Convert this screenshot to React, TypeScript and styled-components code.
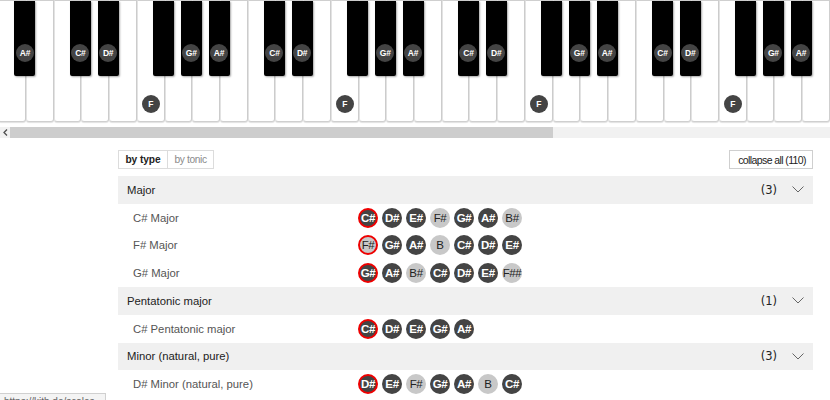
import React from "react";
import styled, { createGlobalStyle } from "styled-components";

const KEY_W = 27.72;

const GlobalStyle = createGlobalStyle`
  html, body { margin: 0; padding: 0; background: #fff; }
  body { font-family: "Liberation Sans", Arial, sans-serif; overflow: hidden; }
  * { box-sizing: border-box; }
`;

const Page = styled.div`
  position: relative;
  width: 830px;
  height: 400px;
  overflow: hidden;
`;

const PianoViewport = styled.div`
  height: 127px;
  overflow: hidden;
`;

const WhiteKeys = styled.div`
  display: flex;
  margin-left: -1.75px;
`;

const WhiteKey = styled.div`
  position: relative;
  flex: 0 0 ${KEY_W}px;
  height: 122px;
  background: #fff;
  border: 1px solid #cfcfcf;
  border-left-color: #e3e3e3;
  border-radius: 0 0 3px 3px;
  box-shadow: 0 1px 1px rgba(0, 0, 0, 0.12);
  display: flex;
  align-items: flex-end;
  justify-content: center;
  padding-bottom: 8px;
`;

const BlackKey = styled.div`
  position: absolute;
  top: 0;
  left: ${KEY_W - 12.5}px;
  width: 21px;
  height: 75px;
  background: #000;
  border-radius: 0 0 2px 2px;
  box-shadow: 1px 1px 2px rgba(0, 0, 0, 0.35);
  z-index: 2;
  display: flex;
  align-items: flex-end;
  justify-content: center;
  padding-bottom: 14px;
`;

const KeyLabel = styled.div`
  width: 18px;
  height: 18px;
  border-radius: 50%;
  background: #444;
  color: #fff;
  font-size: 8.5px;
  font-weight: bold;
  display: flex;
  align-items: center;
  justify-content: center;
  letter-spacing: -0.2px;
`;

const Scrollbar = styled.div`
  display: flex;
  height: 11px;
  background: #f1f1f1;
`;

const ScrollArrow = styled.div`
  flex: 0 0 10px;
  display: flex;
  align-items: center;
  justify-content: center;
`;

const ScrollThumb = styled.div`
  flex: 0 0 543px;
  background: #cdcdcd;
`;

const Content = styled.div`
  width: 695px;
  margin: 12px 0 0 118px;
`;

const Toolbar = styled.div`
  display: flex;
  justify-content: space-between;
  align-items: center;
  height: 19px;
  margin-bottom: 7px;
`;

const Tabs = styled.div`
  display: flex;
  height: 19px;
  border: 1px solid #dcdcdc;
`;

const Tab = styled.div<{ $active?: boolean }>`
  display: flex;
  align-items: center;
  padding: 0 6.5px;
  font-size: 10.2px;
  font-weight: ${(p) => (p.$active ? "bold" : "normal")};
  letter-spacing: ${(p) => (p.$active ? "-0.1px" : "-0.35px")};
  color: ${(p) => (p.$active ? "#222" : "#8a8a8a")};
  & + & {
    border-left: 1px solid #dcdcdc;
  }
`;

const CollapseButton = styled.div`
  display: flex;
  align-items: center;
  height: 19px;
  padding: 0 6px 0 8px;
  border: 1px solid #cfcfcf;
  font-size: 10.5px;
  letter-spacing: -0.6px;
  color: #222;
`;

const GroupHeader = styled.div`
  display: flex;
  align-items: center;
  height: 27.75px;
  padding: 0 9px;
  background: #f0f0f0;
  font-size: 11.3px;
  color: #222;
`;

const GroupTitle = styled.div`
  flex: 1;
`;

const GroupCount = styled.div`
  font-family: "DejaVu Sans", sans-serif;
  font-size: 11.5px;
  color: #222;
  margin-right: 15px;
`;

const Row = styled.div`
  display: grid;
  grid-template-columns: 240px 1fr;
  align-items: center;
  height: 27.75px;
`;

const RowLabel = styled.div`
  padding-left: 15px;
  font-size: 11.3px;
  color: #555;
`;

const Notes = styled.div`
  display: flex;
  gap: 4px;
`;

const Note = styled.div<{ $light?: boolean; $tonic?: boolean }>`
  width: 20px;
  height: 20px;
  border-radius: 50%;
  display: flex;
  align-items: center;
  justify-content: center;
  background: ${(p) => (p.$light ? "#c8c8c8" : "#444")};
  color: ${(p) => (p.$light ? "#222" : "#fff")};
  font-size: 11.5px;
  font-weight: ${(p) => (p.$light ? "normal" : "bold")};
  letter-spacing: -0.4px;
  border: ${(p) => (p.$tonic ? "2px solid #ee0000" : "none")};
`;

const StatusBubble = styled.div`
  position: absolute;
  left: 0;
  top: 393px;
  width: 106px;
  height: 18px;
  padding: 2px 4px;
  background: #f4f4f4;
  border: 1px solid #d0d0d0;
  border-left: none;
  font-size: 10px;
  color: #666;
  white-space: nowrap;
  overflow: hidden;
`;

const WHITE = ["A", "B", "C", "D", "E", "F", "G"];
const BLACK_AFTER: Record<string, string> = { A: "A#", C: "C#", D: "D#", F: "F#", G: "G#" };
const IN_SCALE = new Set(["C#", "D#", "F", "G#", "A#"]);

type N = [string, boolean];
type Scale = { name: string; notes: N[] };
type Group = { title: string; count: number; scales: Scale[] };

const d = (n: string): N => [n, false];
const l = (n: string): N => [n, true];

const GROUPS: Group[] = [
  {
    title: "Major",
    count: 3,
    scales: [
      { name: "C# Major", notes: [d("C#"), d("D#"), d("E#"), l("F#"), d("G#"), d("A#"), l("B#")] },
      { name: "F# Major", notes: [l("F#"), d("G#"), d("A#"), l("B"), d("C#"), d("D#"), d("E#")] },
      { name: "G# Major", notes: [d("G#"), d("A#"), l("B#"), d("C#"), d("D#"), d("E#"), l("F##")] },
    ],
  },
  {
    title: "Pentatonic major",
    count: 1,
    scales: [{ name: "C# Pentatonic major", notes: [d("C#"), d("D#"), d("E#"), d("G#"), d("A#")] }],
  },
  {
    title: "Minor (natural, pure)",
    count: 3,
    scales: [
      { name: "D# Minor (natural, pure)", notes: [d("D#"), d("E#"), l("F#"), d("G#"), d("A#"), l("B"), d("C#")] },
    ],
  },
];

const Chevron = () => (
  <svg width="12" height="7" viewBox="0 0 12 7">
    <polyline points="0.5,0.5 6,6 11.5,0.5" fill="none" stroke="#666" strokeWidth="1" />
  </svg>
);

export default function App() {
  const keys = Array.from({ length: 30 }, (_, i) => WHITE[i % 7]);
  return (
    <Page>
      <GlobalStyle />
      <PianoViewport>
        <WhiteKeys>
          {keys.map((k, i) => {
            const black = BLACK_AFTER[k];
            return (
              <WhiteKey key={i}>
                {IN_SCALE.has(k) && <KeyLabel>{k}</KeyLabel>}
                {black && (
                  <BlackKey>{IN_SCALE.has(black) && <KeyLabel>{black}</KeyLabel>}</BlackKey>
                )}
              </WhiteKey>
            );
          })}
        </WhiteKeys>
      </PianoViewport>
      <Scrollbar>
        <ScrollArrow>
          <svg width="5" height="7" viewBox="0 0 5 7">
            <polyline points="4,0.5 1,3.5 4,6.5" fill="none" stroke="#505050" strokeWidth="1.3" />
          </svg>
        </ScrollArrow>
        <ScrollThumb />
      </Scrollbar>
      <Content>
        <Toolbar>
          <Tabs>
            <Tab $active>by type</Tab>
            <Tab>by tonic</Tab>
          </Tabs>
          <CollapseButton>collapse all (110)</CollapseButton>
        </Toolbar>
        {GROUPS.map((g) => (
          <div key={g.title}>
            <GroupHeader>
              <GroupTitle>{g.title}</GroupTitle>
              <GroupCount>({g.count})</GroupCount>
              <Chevron />
            </GroupHeader>
            {g.scales.map((s) => (
              <Row key={s.name}>
                <RowLabel>{s.name}</RowLabel>
                <Notes>
                  {s.notes.map(([n, light], i) => (
                    <Note key={i} $light={light} $tonic={i === 0}>
                      {n}
                    </Note>
                  ))}
                </Notes>
              </Row>
            ))}
          </div>
        ))}
      </Content>
      <StatusBubble>https://kitb.de/scales</StatusBubble>
    </Page>
  );
}
